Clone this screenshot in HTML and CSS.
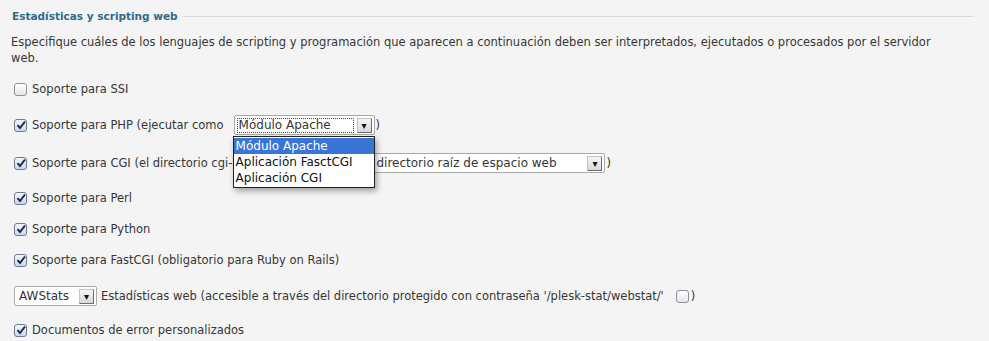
FILE: index.html
```html
<!DOCTYPE html>
<html>
<head>
<meta charset="utf-8">
<link rel="stylesheet" href="styles.css">
</head>
<body>
<div class="panel">
  <div class="legend"><span class="legend-title">Estadísticas y scripting web</span><span class="legend-line"></span></div>
  <p class="desc">Especifique cuáles de los lenguajes de scripting y programación que aparecen a continuación deben ser interpretados, ejecutados o procesados por el servidor web.</p>

  <div class="row"><span class="check"></span><span>Soporte para SSI</span></div>

  <div class="row row-select">
    <span class="check on"><svg viewBox="0 0 12 12"><path d="M2.5 6.2 L5 9 L10 2.5" fill="none" stroke="#1d2a44" stroke-width="2"/></svg></span>
    <span>Soporte para PHP (ejecutar como</span>
    <span class="select-wrap">
      <span class="select select-php focus"><span class="select-text">Módulo Apache</span><span class="select-btn">▾</span></span>
      <span class="menu">
        <span class="menu-item active">Módulo Apache</span>
        <span class="menu-item">Aplicación FasctCGI</span>
        <span class="menu-item">Aplicación CGI</span>
      </span>
    </span><span class="paren">)</span>
  </div>

  <div class="row row-select row-cgi">
    <span class="check on"><svg viewBox="0 0 12 12"><path d="M2.5 6.2 L5 9 L10 2.5" fill="none" stroke="#1d2a44" stroke-width="2"/></svg></span>
    <span class="cgi-label">Soporte para CGI (el directorio cgi-bin está ubicado en el</span>
    <span class="select select-cgi"><span class="select-text">directorio raíz de espacio web</span><span class="select-btn">▾</span></span><span class="paren">)</span>
  </div>

  <div class="row"><span class="check on"><svg viewBox="0 0 12 12"><path d="M2.5 6.2 L5 9 L10 2.5" fill="none" stroke="#1d2a44" stroke-width="2"/></svg></span><span>Soporte para Perl</span></div>
  <div class="row"><span class="check on"><svg viewBox="0 0 12 12"><path d="M2.5 6.2 L5 9 L10 2.5" fill="none" stroke="#1d2a44" stroke-width="2"/></svg></span><span>Soporte para Python</span></div>
  <div class="row"><span class="check on"><svg viewBox="0 0 12 12"><path d="M2.5 6.2 L5 9 L10 2.5" fill="none" stroke="#1d2a44" stroke-width="2"/></svg></span><span>Soporte para FastCGI (obligatorio para Ruby on Rails)</span></div>

  <div class="row row-select row-stats">
    <span class="select select-stats"><span class="select-text">AWStats</span><span class="select-btn">▾</span></span>
    <span class="stats-label">Estadísticas web (accesible a través del directorio protegido con contraseña '/plesk-stat/webstat/'</span>
    <span class="check small"></span><span class="paren">)</span>
  </div>

  <div class="row"><span class="check on"><svg viewBox="0 0 12 12"><path d="M2.5 6.2 L5 9 L10 2.5" fill="none" stroke="#1d2a44" stroke-width="2"/></svg></span><span>Documentos de error personalizados</span></div>
</div>
</body>
</html>
```

FILE: styles.css
```css
body {
  margin: 0;
  background: #f4f4f4;
  font-family: "DejaVu Sans", Verdana, sans-serif;
  font-size: 11.5px;
  color: #363636;
}

.panel {
  padding: 8px 16px 0 11px;
}

/* fieldset style header */
.legend {
  display: flex;
  align-items: center;
  height: 16px;
  margin-left: 1px;
}
.legend-title {
  font-weight: bold;
  font-size: 10.5px;
  color: #2f6a8b;
}
.legend-line {
  flex: 1;
  height: 1px;
  margin-left: 5px;
  background: #d6dade;
}

.desc {
  margin: 10px 20px 0 0;
  line-height: 16px;
}

.row {
  display: flex;
  align-items: center;
  height: 16px;
  margin-top: 15px;
  margin-left: 3px;
  white-space: nowrap;
}
.row-select {
  height: 20px;
  margin-top: 18px;
  margin-bottom: 1px;
}
.row-cgi {
  margin-bottom: 17px;
}
.row-stats {
  margin-bottom: 16px;
}
.desc + .row {
  margin-top: 15px;
}

/* checkboxes */
.check {
  display: inline-block;
  box-sizing: border-box;
  width: 13px;
  height: 13px;
  margin-right: 5px;
  border: 1px solid #8c9098;
  border-radius: 3px;
  background: linear-gradient(#ffffff, #e4e6ea);
  position: relative;
  flex: none;
}
.check.on {
  border-color: #6f7a92;
  background: linear-gradient(#f4f7fd, #c9d6ee);
}
.check svg {
  position: absolute;
  left: 0;
  top: -1px;
  width: 12px;
  height: 12px;
}
.check.small {
  margin-left: 12px;
  margin-right: 1px;
}

/* fake selects */
.select {
  display: inline-flex;
  align-items: center;
  box-sizing: border-box;
  height: 20px;
  background: #fff;
  border: 1px solid #a9a9a9;
  border-radius: 2px;
  position: relative;
}
.select-text {
  flex: 1;
  padding-left: 4px;
  font-size: 12px;
}
.select-btn {
  width: 15px;
  height: 15px;
  margin-right: 2px;
  box-sizing: border-box;
  border: 1px solid #c4c4c4;
  border-right-color: #6d6d6d;
  border-bottom-color: #6d6d6d;
  background: linear-gradient(#f6f6f6, #d8d8d8);
  font-size: 10px;
  line-height: 13px;
  text-align: center;
  color: #111;
}
.select-wrap {
  position: relative;
  margin-left: 10px;
}
.select-php {
  width: 141px;
}
.select-php.focus .select-text {
  outline: 1px dotted #444;
  outline-offset: -1px;
  margin: 2px 3px 2px 2px;
  padding: 1px 0 1px 2px;
  line-height: 13px;
}
.select-cgi {
  width: 234px;
  margin-left: 12px;
}
.select-stats {
  width: 83px;
}
.paren {
  margin-left: 1px;
}
.stats-label {
  margin-left: 4px;
}

/* open dropdown list */
.menu {
  position: absolute;
  left: -1px;
  top: 21px;
  width: 142px;
  box-sizing: border-box;
  padding: 1px 0;
  border: 1px solid #222;
  background: #fff;
  box-shadow: 2px 3px 6px rgba(0, 0, 0, 0.35);
  z-index: 5;
}
.menu-item {
  display: block;
  height: 16px;
  line-height: 16px;
  padding-left: 2px;
  font-size: 12px;
  color: #111;
}
.menu-item.active {
  background: #3875d7;
  color: #fff;
}
```
